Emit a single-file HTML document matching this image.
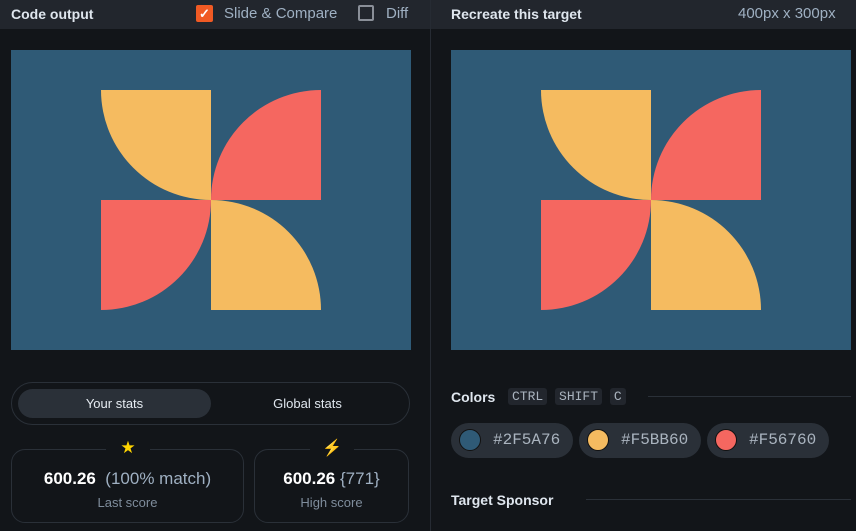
<!DOCTYPE html>
<html><head><style>
*{margin:0;padding:0;box-sizing:border-box}
body{width:856px;height:531px;background:#121519;font-family:"Liberation Sans",sans-serif;position:relative;overflow:hidden;color:#dfe6ee}
.hdr{position:absolute;top:0;height:29px;background:#22262d}
.t{position:absolute;font-size:14px;font-weight:bold;color:#dfe6ee}
.a{position:absolute;font-size:15px;color:#9fb0c2}
.card{position:absolute;border:1.5px solid #2a3038;border-radius:14px}
</style></head><body>
<div class="hdr" style="left:0;width:430px"></div>
<div class="hdr" style="left:431px;width:425px"></div>
<div style="position:absolute;left:430px;top:0;width:1px;height:531px;background:#262b33"></div>
<div class="t" style="left:11px;top:6px">Code output</div>
<div style="position:absolute;left:196px;top:5px;width:17px;height:17px;background:#f05a24;border-radius:2px;color:#fff;font-size:13px;text-align:center;line-height:17px;font-weight:bold">✓</div>
<div class="a" style="left:224px;top:5px">Slide &amp; Compare</div>
<div style="position:absolute;left:358px;top:5px;width:16px;height:16px;border:2px solid #8a8f98;border-radius:2px"></div>
<div class="a" style="left:386px;top:5px">Diff</div>
<div class="t" style="left:451px;top:6px">Recreate this target</div>
<div class="a" style="left:738px;top:5px">400px x 300px</div>

<svg style="position:absolute;left:11px;top:50px" width="400" height="300"><rect width="400" height="300" fill="#2F5A76"/>
<path d="M200 40 A110 110 0 0 1 90 40 Z M200 40 L200 150 A110 110 0 0 1 90 40 Z" fill="#F5BB60"/>
<path d="M310 150 L200 150 A110 110 0 0 1 310 40 Z" fill="#F56760"/>
<path d="M90 150 L200 150 A110 110 0 0 1 90 260 Z" fill="#F56760"/>
<path d="M200 260 L200 150 A110 110 0 0 1 310 260 Z" fill="#F5BB60"/></svg>
<svg style="position:absolute;left:451px;top:50px" width="400" height="300"><rect width="400" height="300" fill="#2F5A76"/>
<path d="M200 40 L200 150 A110 110 0 0 1 90 40 Z" fill="#F5BB60"/>
<path d="M310 150 L200 150 A110 110 0 0 1 310 40 Z" fill="#F56760"/>
<path d="M90 150 L200 150 A110 110 0 0 1 90 260 Z" fill="#F56760"/>
<path d="M200 260 L200 150 A110 110 0 0 1 310 260 Z" fill="#F5BB60"/></svg>

<div style="position:absolute;left:11px;top:382px;width:399px;height:43px;border:1.5px solid #2a3038;border-radius:22px"></div>
<div style="position:absolute;left:18px;top:389px;width:193px;height:29px;background:#2a3038;border-radius:15px;font-size:13px;text-align:center;line-height:29px;color:#e6ecf2">Your stats</div>
<div style="position:absolute;left:211px;top:389px;width:193px;height:29px;font-size:13px;text-align:center;line-height:29px;color:#dfe6ee">Global stats</div>

<div class="card" style="left:11px;top:449px;width:233px;height:74px"></div>
<div style="position:absolute;left:106px;top:438px;width:44px;height:20px;background:#121519;color:#ffd400;font-size:17px;text-align:center">★</div>
<div style="position:absolute;left:11px;top:469px;width:233px;text-align:center;font-size:17px;color:#9fb0c2"><b style="color:#fff">600.26</b>&nbsp; (100% match)</div>
<div style="position:absolute;left:11px;top:495px;width:233px;text-align:center;font-size:13px;color:#7f8d9c">Last score</div>
<div class="card" style="left:254px;top:449px;width:155px;height:74px"></div>
<div style="position:absolute;left:310px;top:438px;width:44px;height:20px;background:#121519;color:#ffd400;font-size:16px;text-align:center">⚡</div>
<div style="position:absolute;left:254px;top:469px;width:155px;text-align:center;font-size:17px;color:#9fb0c2"><b style="color:#fff">600.26</b> {771}</div>
<div style="position:absolute;left:254px;top:495px;width:155px;text-align:center;font-size:13px;color:#7f8d9c">High score</div>

<div class="t" style="left:451px;top:389px">Colors</div>
<div style="position:absolute;left:508px;top:389px;font-family:'Liberation Mono',monospace;font-size:13px;color:#aab4bf">
<span style="background:#22262d;padding:1px 4px;border-radius:3px">CTRL</span> <span style="background:#22262d;padding:1px 4px;border-radius:3px">SHIFT</span> <span style="background:#22262d;padding:1px 4px;border-radius:3px">C</span></div>
<div style="position:absolute;left:648px;top:396px;width:203px;height:1px;background:#2a3038"></div>
<div style="position:absolute;left:451px;top:423px;width:122px;height:35px;background:#2a3038;border-radius:18px"></div>
<div style="position:absolute;left:579px;top:423px;width:122px;height:35px;background:#2a3038;border-radius:18px"></div>
<div style="position:absolute;left:707px;top:423px;width:122px;height:35px;background:#2a3038;border-radius:18px"></div>
<div style="position:absolute;left:459px;top:429px;width:22px;height:22px;border-radius:50%;background:#2F5A76;border:1.5px solid #111"></div>
<div style="position:absolute;left:587px;top:429px;width:22px;height:22px;border-radius:50%;background:#F5BB60;border:1.5px solid #111"></div>
<div style="position:absolute;left:715px;top:429px;width:22px;height:22px;border-radius:50%;background:#F56760;border:1.5px solid #111"></div>
<div style="position:absolute;left:493px;top:431px;font-family:'Liberation Mono',monospace;font-size:16px;color:#aab4bf">#2F5A76</div>
<div style="position:absolute;left:621px;top:431px;font-family:'Liberation Mono',monospace;font-size:16px;color:#aab4bf">#F5BB60</div>
<div style="position:absolute;left:749px;top:431px;font-family:'Liberation Mono',monospace;font-size:16px;color:#aab4bf">#F56760</div>
<div class="t" style="left:451px;top:492px">Target Sponsor</div>
<div style="position:absolute;left:586px;top:499px;width:265px;height:1px;background:#2a3038"></div>
</body></html>
